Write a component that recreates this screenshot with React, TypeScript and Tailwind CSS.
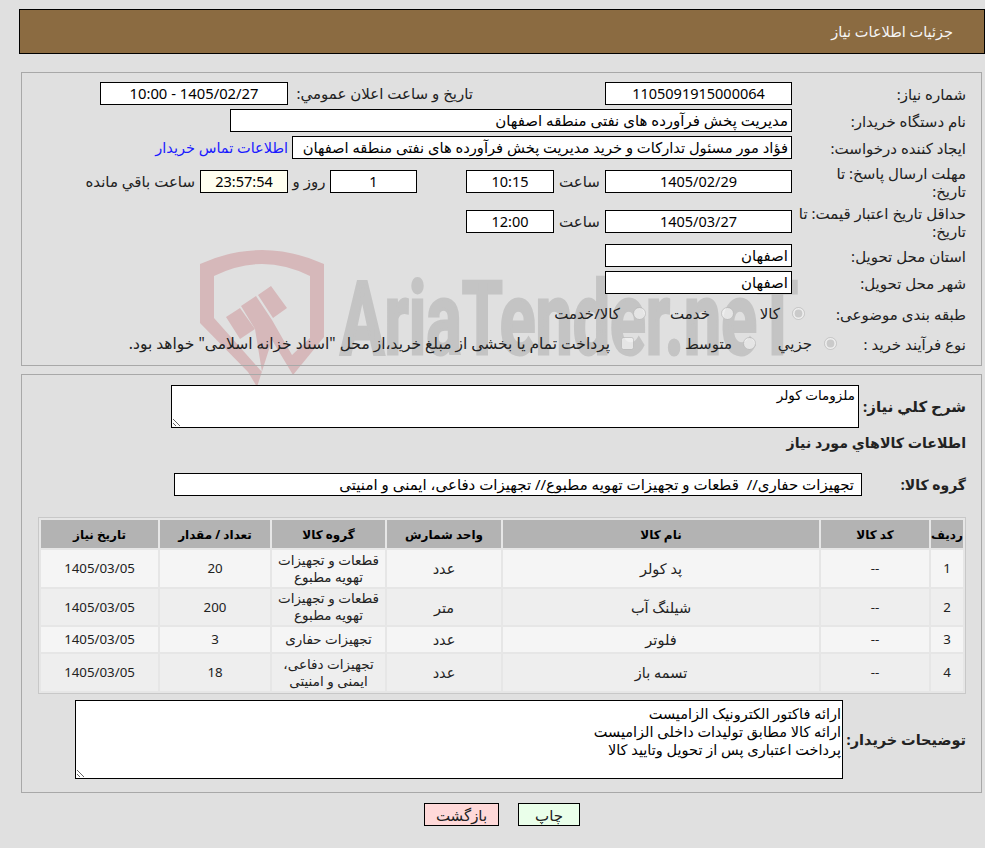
import React from "react";

const font = { fontFamily: '"Noto Sans","DejaVu Sans",sans-serif' };

function Box({ w, children, align = "text-center", bg = "bg-white", size = "text-[14.5px]" }: { w: string; children?: React.ReactNode; align?: string; bg?: string; size?: string }) {
  return (
    <div className={`${w} ${bg} ${align} ${size} h-[23px] shrink-0 border border-black leading-[21px] px-[3px] whitespace-nowrap overflow-hidden`}>
      {children}
    </div>
  );
}

function Label({ children }: { children: React.ReactNode }) {
  return <div className="w-[189px] shrink-0 pr-[15px] text-right leading-[18px] text-[15px] text-[#222] whitespace-nowrap">{children}</div>;
}

function Watermark() {
  return (
    <svg className="absolute left-0 top-0 pointer-events-none" width="985" height="400" viewBox="0 0 985 400" aria-hidden="true">
      <path
        fill="#d6b8ba"
        fillRule="evenodd"
        d="M200 264 Q262 236 324 264 L324 337 L293 375 L272 340 L257 387 L248 372 L200 323 Z M214 276 L214 318 L262 372 L255 329 L241 306 L256 296 L272 320 L292 355 L310 338 L310 276 Q262 252 214 276 Z"
      />
      <path fill="#d6b8ba" d="M226 317 L240 308 L255 329 L240 339 Z M258 295 L271 286 L287 308 L273 318 Z" />
      <text x="340" y="354" fill="#c4c4c4" stroke="#c4c4c4" strokeWidth="3" fontSize="102" fontWeight="700" textLength="458" lengthAdjust="spacingAndGlyphs" direction="ltr" style={{ fontFamily: "Roboto, sans-serif" }}>
        AriaTender.neT
      </text>
    </svg>
  );
}

const rows = [
  ["1", "--", "پد کولر", "عدد", "قطعات و تجهیزات تهویه مطبوع", "20", "1405/03/05", "h-[37px]", "bg-[#f5f5f5]"],
  ["2", "--", "شیلنگ آب", "متر", "قطعات و تجهیزات تهویه مطبوع", "200", "1405/03/05", "h-[36px]", "bg-[#eeeeee]"],
  ["3", "--", "فلوتر", "عدد", "تجهیزات حفاری", "3", "1405/03/05", "h-[25px]", "bg-[#f5f5f5]"],
  ["4", "--", "تسمه باز", "عدد", "تجهیزات دفاعی، ایمنی و امنیتی", "18", "1405/03/05", "h-[37px]", "bg-[#eeeeee]"],
];

export default function App() {
  return (
    <div dir="rtl" style={font} className="relative min-h-[848px] w-[985px] overflow-hidden bg-[#e0e0e0] text-[15px] text-black">
      <Watermark />
      <div className="relative pt-[9px]">
        <div className="ml-[19px] flex h-[45px] items-center border border-black bg-[#8b6b41] pr-[31px] text-[14.5px] text-[#f5f5f5]">
          جزئیات اطلاعات نیاز
        </div>

        <section className="mt-[18px] ml-[21px] mr-[3px] h-[294px] border border-[#a8a8a8] pt-[9px]">
          <div className="flex h-[23px] items-center">
            <Label>شماره نیاز:</Label>
            <Box w="w-[187px]">1105091915000064</Box>
            <div className="mr-[132px] w-[185px] shrink-0 text-[#222] whitespace-nowrap">تاریخ و ساعت اعلان عمومي:</div>
            <Box w="w-[188px]" size="text-[14.8px]">1405/02/27 - 10:00</Box>
          </div>
          <div className="mt-[4px] flex h-[23px] items-center">
            <Label>نام دستگاه خریدار:</Label>
            <Box w="w-[562px]" align="text-right" size="text-[15px]">مدیریت پخش فرآورده های نفتی منطقه اصفهان</Box>
          </div>
          <div className="mt-[4px] flex h-[23px] items-center">
            <Label>ایجاد کننده درخواست:</Label>
            <Box w="w-[500px]" align="text-right" size="text-[14.7px]">فؤاد مور مسئول تدارکات و خرید مدیریت پخش فرآورده های نفتی منطقه اصفهان</Box>
            <a className="mr-[4px] whitespace-nowrap text-[14.5px] text-[#1a1aff]" href="#">اطلاعات تماس خریدار</a>
          </div>
          <div className="mt-[11px] flex h-[23px] items-center">
            <Label>مهلت ارسال پاسخ: تا<br />تاریخ:</Label>
            <Box w="w-[187px]">1405/02/29</Box>
            <div className="w-[51px] shrink-0 text-center text-[#222]">ساعت</div>
            <Box w="w-[88px]">10:15</Box>
            <div className="w-[49px] shrink-0" />
            <Box w="w-[87px]">1</Box>
            <div className="w-[42px] shrink-0 text-center text-[#222]">روز و</div>
            <Box w="w-[88px]" bg="bg-[#fffff0]">23:57:54</Box>
            <div className="mr-[5px] whitespace-nowrap text-[#222]">ساعت باقي مانده</div>
          </div>
          <div className="mt-[17px] flex h-[23px] items-center">
            <Label>حداقل تاریخ اعتبار قیمت: تا<br />تاریخ:</Label>
            <Box w="w-[187px]">1405/03/27</Box>
            <div className="w-[51px] shrink-0 text-center text-[#222]">ساعت</div>
            <Box w="w-[88px]">12:00</Box>
          </div>
          <div className="mt-[11px] flex h-[23px] items-center">
            <Label>استان محل تحویل:</Label>
            <Box w="w-[187px]" align="text-right" size="text-[15px]">اصفهان</Box>
          </div>
          <div className="mt-[4px] flex h-[23px] items-center">
            <Label>شهر محل تحویل:</Label>
            <Box w="w-[187px]" align="text-right" size="text-[15px]">اصفهان</Box>
          </div>
          <div className="mt-[8px] flex h-[23px] items-center">
            <Label>طبقه بندی موضوعی:</Label>
            <input type="radio" disabled defaultChecked name="k" className="mr-[-13px] h-[13px] w-[13px] shrink-0" />
            <span className="mr-[12px] w-[46px] shrink-0 text-[#222]">کالا</span>
            <input type="radio" disabled name="k" className="h-[13px] w-[13px] shrink-0" />
            <span className="mr-[11px] w-[64px] shrink-0 text-[#222]">خدمت</span>
            <input type="radio" disabled name="k" className="h-[13px] w-[13px] shrink-0" />
            <span className="mr-[13px] whitespace-nowrap text-[#222]">کالا/خدمت</span>
          </div>
          <div className="mt-[7px] flex h-[23px] items-center">
            <Label>نوع فرآیند خرید :</Label>
            <input type="radio" disabled defaultChecked name="n" className="mr-[-45px] h-[13px] w-[13px] shrink-0" />
            <span className="mr-[12px] w-[56px] shrink-0 text-[#222]">جزیي</span>
            <input type="radio" disabled name="n" className="h-[13px] w-[13px] shrink-0" />
            <span className="mr-[11px] w-[98px] shrink-0 text-[#222]">متوسط</span>
            <input type="checkbox" disabled className="h-[13px] w-[13px] shrink-0" />
            <span className="mr-[11px] whitespace-nowrap text-[15.5px] text-[#222]">پرداخت تمام یا بخشی از مبلغ خرید،از محل "اسناد خزانه اسلامی" خواهد بود.</span>
          </div>
        </section>

        <section className="mt-[8px] ml-[21px] mr-[3px] h-[419px] border border-[#a8a8a8] pl-[16px] pr-[15px] pt-[10px]">
          <div className="flex items-center">
            <div className="w-[107px] shrink-0 whitespace-nowrap font-bold text-[15px] text-[#222]">شرح کلي نیاز:</div>
            <textarea readOnly defaultValue="ملزومات کولر" className="h-[43px] w-[688px] resize border border-black bg-white px-[3px] text-[13.5px] leading-[18px] outline-none" />
          </div>
          <div className="mt-[5px] h-[20px] whitespace-nowrap font-bold text-[14.2px] leading-[20px] text-[#222]">اطلاعات کالاهاي مورد نیاز</div>
          <div className="mt-[20px] flex items-center">
            <div className="w-[104px] shrink-0 whitespace-nowrap font-bold text-[14px] text-[#222]">گروه کالا:</div>
            <div className="flex h-[23px] w-[688px] items-center overflow-hidden whitespace-pre border border-black bg-white pr-[7px] text-[15px]">تجهیزات حفاری//  قطعات و تجهیزات تهویه مطبوع// تجهیزات دفاعی، ایمنی و امنیتی</div>
          </div>
          <table className="mt-[21px] w-[926px] table-fixed border-separate border-spacing-[2px] border border-[#c8c8c8] bg-[#e6e6e6] text-center text-[15px] leading-[17px] text-[#222]">
            <colgroup>
              <col className="w-[32px]" />
              <col className="w-[108px]" />
              <col className="w-[316px]" />
              <col className="w-[114px]" />
              <col className="w-[113px]" />
              <col className="w-[110px]" />
              <col className="w-[117px]" />
            </colgroup>
            <thead>
              <tr className="h-[28px] bg-[#b3b3b3] font-bold text-black">
                {["ردیف", "کد کالا", "نام کالا", "واحد شمارش", "گروه کالا", "تعداد / مقدار", "تاریخ نیاز"].map((h) => (
                  <th key={h} className="p-0 text-[12px] font-bold">{h}</th>
                ))}
              </tr>
            </thead>
            <tbody>
              {rows.map((r) => (
                <tr key={r[0]} className={`${r[7]} ${r[8]}`}>
                  {r.slice(0, 7).map((c, i) => (
                    <td key={i} className={i === 0 || i === 1 || i === 5 || i === 6 ? "p-0 text-[13.3px]" : i === 4 ? "p-0 px-[2px] text-[13.5px]" : "p-0 text-[14.5px]"}>{c}</td>
                  ))}
                </tr>
              ))}
            </tbody>
          </table>
          <div className="mt-[6px] flex items-center">
            <div className="w-[123px] shrink-0 whitespace-nowrap font-bold text-[14.5px] text-[#222]">توضیحات خریدار:</div>
            <textarea
              readOnly
              defaultValue={"ارائه فاکتور الکترونیک الزامیست\nارائه کالا مطابق تولیدات داخلی الزامیست\nپرداخت اعتباری پس از تحویل وتایید کالا"}
              className="h-[79px] w-[768px] resize border border-black bg-white px-[1px] py-[3px] text-[14.5px] leading-[18px] outline-none"
            />
          </div>
        </section>

        <div className="mt-[10px] flex justify-center gap-[19px] pl-[19px]">
          <button className="h-[23px] w-[62px] border border-black bg-[#eaffea] text-[15px] text-[#222]">چاپ</button>
          <button className="h-[23px] w-[75px] border border-black bg-[#ffd9d9] text-[15px] text-[#222]">بازگشت</button>
        </div>
      </div>
    </div>
  );
}
